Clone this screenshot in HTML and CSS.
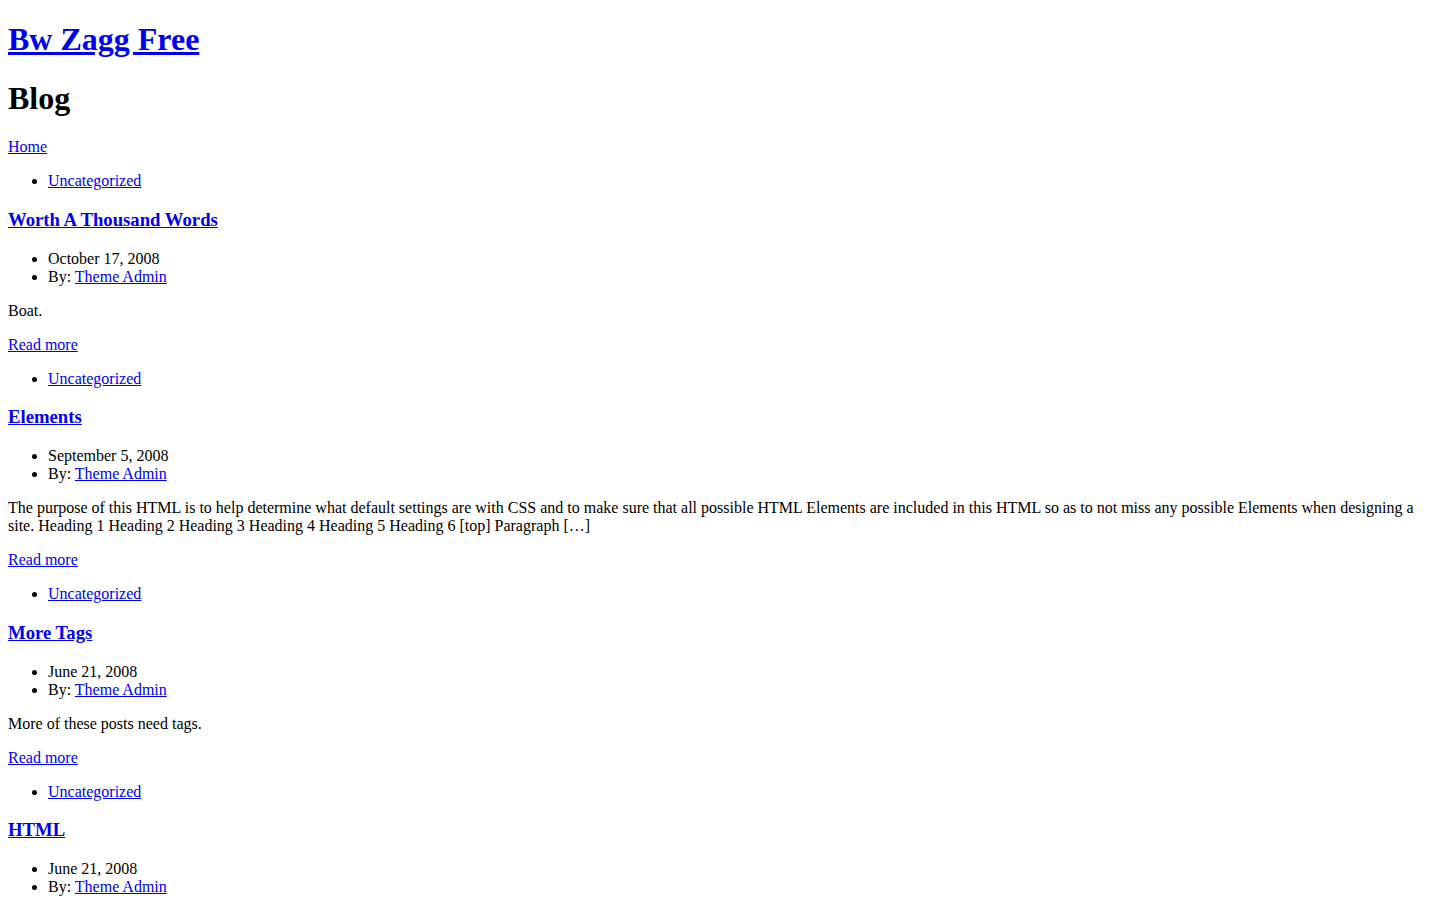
FILE: index.html
```html
<!DOCTYPE html>
<html>
<head>
<meta charset="utf-8">
<title>Blog</title>
<link rel="stylesheet" href="styles.css">
</head>
<body>
<header class="site-header">
  <h1 class="site-title"><a href="#">Bw Zagg Free</a></h1>
  <h1 class="page-title">Blog</h1>
  <p class="crumbs"><a href="#">Home</a></p>
</header>
<main class="posts">
  <article class="post">
    <ul class="cats"><li><a href="#">Uncategorized</a></li></ul>
    <h3 class="post-title"><a href="#">Worth A Thousand Words</a></h3>
    <ul class="meta"><li>October 17, 2008</li><li>By: <a href="#">Theme Admin</a></li></ul>
    <p>Boat.</p>
    <p><a href="#">Read more</a></p>
  </article>
  <article class="post">
    <ul class="cats"><li><a href="#">Uncategorized</a></li></ul>
    <h3 class="post-title"><a href="#">Elements</a></h3>
    <ul class="meta"><li>September 5, 2008</li><li>By: <a href="#">Theme Admin</a></li></ul>
    <p>The purpose of this HTML is to help determine what default settings are with CSS and to make sure that all possible HTML Elements are included in this HTML so as to not miss any possible Elements when designing a site. Heading 1 Heading 2 Heading 3 Heading 4 Heading 5 Heading 6 [top] Paragraph […]</p>
    <p><a href="#">Read more</a></p>
  </article>
  <article class="post">
    <ul class="cats"><li><a href="#">Uncategorized</a></li></ul>
    <h3 class="post-title"><a href="#">More Tags</a></h3>
    <ul class="meta"><li>June 21, 2008</li><li>By: <a href="#">Theme Admin</a></li></ul>
    <p>More of these posts need tags.</p>
    <p><a href="#">Read more</a></p>
  </article>
  <article class="post">
    <ul class="cats"><li><a href="#">Uncategorized</a></li></ul>
    <h3 class="post-title"><a href="#">HTML</a></h3>
    <ul class="meta"><li>June 21, 2008</li><li>By: <a href="#">Theme Admin</a></li></ul>
    <p>This is a post with HTML content.</p>
    <p><a href="#">Read more</a></p>
  </article>
</main>
</body>
</html>
```
FILE: styles.css
```css
body {
  font-family: "Liberation Serif", "Times New Roman", serif;
  color: #000;
  background: #fff;
}
a {
  color: #0000ee;
}
.site-title {
  margin-top: 13.44px;
}
```
